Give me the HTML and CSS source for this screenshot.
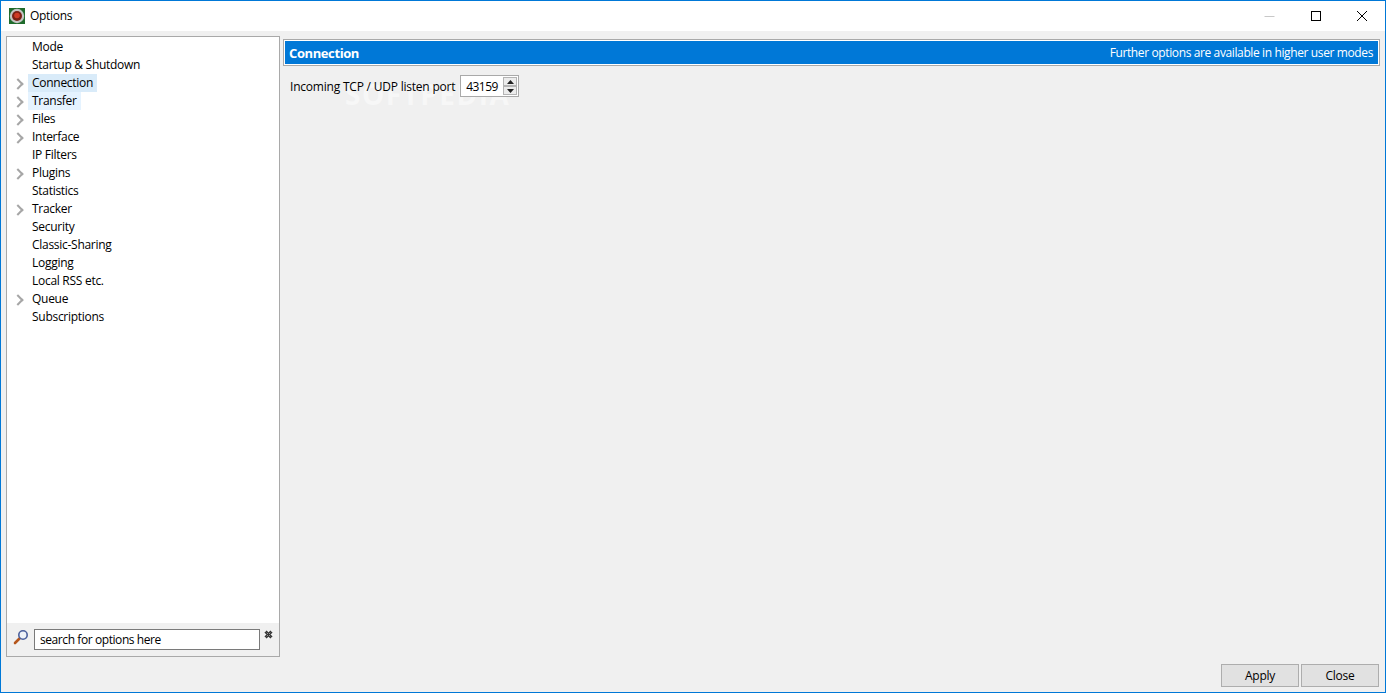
FILE: index.html
```html
<!DOCTYPE html>
<html lang="en">
<head>
<meta charset="utf-8">
<title>Options</title>
<link rel="stylesheet" href="styles.css">
</head>
<body>
<div class="window">
  <div class="watermark">SOFTPEDIA</div>
  <header class="titlebar">
    <svg class="app-icon" width="16" height="16" viewBox="0 0 16 16"><rect width="16" height="16" fill="#1f6b2c"/><circle cx="8" cy="8" r="7.200" fill="#c4c4c4"/><circle cx="8" cy="8" r="5" fill="#7a2016"/><circle cx="8" cy="7.500" r="2.800" fill="#cf3a26"/></svg>
    <span class="title">Options</span>
    <div class="controls">
      <svg class="ctl" width="46" height="30" viewBox="0 0 46 30"><path d="M17.500 15.500h10" stroke="#c8c8c8" fill="none"/></svg>
      <svg class="ctl" width="46" height="30" viewBox="0 0 46 30"><rect x="18.500" y="10.500" width="9" height="9" stroke="#000" fill="none"/></svg>
      <svg class="ctl" width="46" height="30" viewBox="0 0 46 30"><path d="M18 10l10 10M28 10l-10 10" stroke="#000" fill="none"/></svg>
    </div>
  </header>
  <main class="content">
    <div class="panes">
      <aside class="sidebar">
        <ul class="tree">
          <li class="node"><span class="label">Mode</span></li>
          <li class="node"><span class="label">Startup &amp; Shutdown</span></li>
          <li class="node parent"><span class="label sel">Connection</span></li>
          <li class="node parent"><span class="label hov">Transfer</span></li>
          <li class="node parent"><span class="label">Files</span></li>
          <li class="node parent"><span class="label">Interface</span></li>
          <li class="node"><span class="label">IP Filters</span></li>
          <li class="node parent"><span class="label">Plugins</span></li>
          <li class="node"><span class="label">Statistics</span></li>
          <li class="node parent"><span class="label">Tracker</span></li>
          <li class="node"><span class="label">Security</span></li>
          <li class="node"><span class="label">Classic-Sharing</span></li>
          <li class="node"><span class="label">Logging</span></li>
          <li class="node"><span class="label">Local RSS etc.</span></li>
          <li class="node parent"><span class="label">Queue</span></li>
          <li class="node"><span class="label">Subscriptions</span></li>
        </ul>
        <div class="searchbar">
          <svg class="lens" width="16" height="16" viewBox="0 0 16 16"><path d="M6.500 9.500L2 14" stroke="#b5561c" stroke-width="2.600" stroke-linecap="round"/><circle cx="10" cy="6" r="4.200" fill="#eef2f8" stroke="#4a5f9c" stroke-width="1.600"/></svg>
          <div class="search-input">search for options here</div>
          <svg class="clear" width="9" height="9" viewBox="0 0 9 9"><path d="M1.500 1.500l6 6M7.500 1.500l-6 6" stroke="#333" stroke-width="3"/><path d="M1.500 1.500l6 6M7.500 1.500l-6 6" stroke="#ddd" stroke-width="0.800" stroke-dasharray="1 1.500"/></svg>
        </div>
      </aside>
      <section class="page">
        <div class="page-head">
          <strong class="page-title">Connection</strong>
          <span class="page-note">Further options are available in higher user modes</span>
        </div>
        <div class="field">
          <span class="field-label">Incoming TCP / UDP listen port</span>
          <div class="spinner">
            <span class="spin-value">43159</span>
            <div class="spin-btns">
              <span class="spin-btn"><svg width="7" height="4" viewBox="0 0 7 4"><path d="M3.500 0L7 4H0z" fill="#222"/></svg></span>
              <span class="spin-btn"><svg width="7" height="4" viewBox="0 0 7 4"><path d="M0 0h7L3.500 4z" fill="#222"/></svg></span>
            </div>
          </div>
        </div>
      </section>
    </div>
    <footer class="actions">
      <button class="btn">Apply</button>
      <button class="btn">Close</button>
    </footer>
  </main>
</div>
</body>
</html>
```
FILE: styles.css
```css
* { box-sizing: border-box; }
html, body { margin: 0; height: 100%; overflow: hidden; }
body { font-family: "Open Sans", "Noto Sans", sans-serif; font-size: 12px; color: #000; }
.window { position: relative; width: 1386px; height: 693px; border: 1px solid #0078d7; display: flex; flex-direction: column; background: #f0f0f0; }
.titlebar { height: 30px; flex: none; background: #fff; display: flex; align-items: center; padding-left: 8px; }
.app-icon { flex: none; }
.title { margin: 0 0 2px 5px; letter-spacing: -0.3px; }
.controls { margin-left: auto; display: flex; }
.ctl { display: block; }
.content { position: relative; z-index: 1; flex: 1; min-height: 0; display: flex; flex-direction: column; padding: 5px 5px 5px 5px; }
.panes { flex: 1; min-height: 0; display: flex; gap: 3px; }
.sidebar { width: 274px; flex: none; height: 621px; border: 1px solid #a9a9a9; background: #f0f0f0; display: flex; flex-direction: column; }
.tree { list-style: none; margin: 0; padding: 1px 0 0; flex: 1; background: #fff; }
.node { height: 18px; display: flex; align-items: center; padding-left: 21px; position: relative; }
.parent::before { content: ""; position: absolute; left: 7px; top: 6px; width: 6px; height: 6px; border-top: 2px solid #a6a6a6; border-right: 2px solid #a6a6a6; transform: rotate(45deg); }
.label { display: block; height: 18px; line-height: 17px; padding: 0 4px; letter-spacing: -0.28px; white-space: nowrap; }
.sel { background: #d9ebf9; }
.hov { background: #e5f3ff; }
.searchbar { height: 33px; flex: none; display: flex; align-items: flex-start; padding: 6px 0 0 6px; }
.lens { flex: none; }
.search-input { width: 226px; height: 21px; margin-left: 5px; background: #fff; border: 1px solid #7a7a7a; padding-left: 5px; line-height: 20px; letter-spacing: -0.42px; }
.clear { margin: 1px 0 0 4px; }
.page { flex: 1; min-width: 0; display: flex; flex-direction: column; }
.page-head { margin-top: 3px; height: 27px; border: 1px solid #a9a9a9; box-shadow: inset 0 0 0 1px #fff; background: #0078d7; color: #fff; display: flex; align-items: center; justify-content: space-between; padding: 0 6px 0 5px; }
.page-title { font-size: 13px; font-weight: 700; letter-spacing: -0.4px; }
.page-note { letter-spacing: -0.38px; }
.field { display: flex; align-items: center; margin-top: 9px; padding-left: 7px; }
.field-label { letter-spacing: -0.21px; padding-top: 1px; }
.spinner { margin-left: 5px; width: 59px; height: 22px; background: #fff; border: 1px solid #a9a9a9; display: flex; align-items: center; justify-content: space-between; padding: 0 1px 0 5px; }
.spin-value { letter-spacing: -0.6px; }
.spin-btns { display: flex; flex-direction: column; width: 14px; height: 18px; }
.spin-btn { flex: 1; background: #ececec; border: 1px solid #b4b4b4; display: flex; align-items: center; justify-content: center; }
.actions { flex: none; display: flex; justify-content: flex-end; gap: 2px; padding-right: 1px; }
.btn { width: 78px; height: 23px; padding: 0; background: #e1e1e1; border: 1px solid #adadad; font: inherit; color: #000; letter-spacing: -0.28px; }
.watermark { position: absolute; left: 344px; top: 74px; font-size: 28px; font-weight: 700; letter-spacing: 1.5px; color: #f7f7f7; pointer-events: none; }
```
